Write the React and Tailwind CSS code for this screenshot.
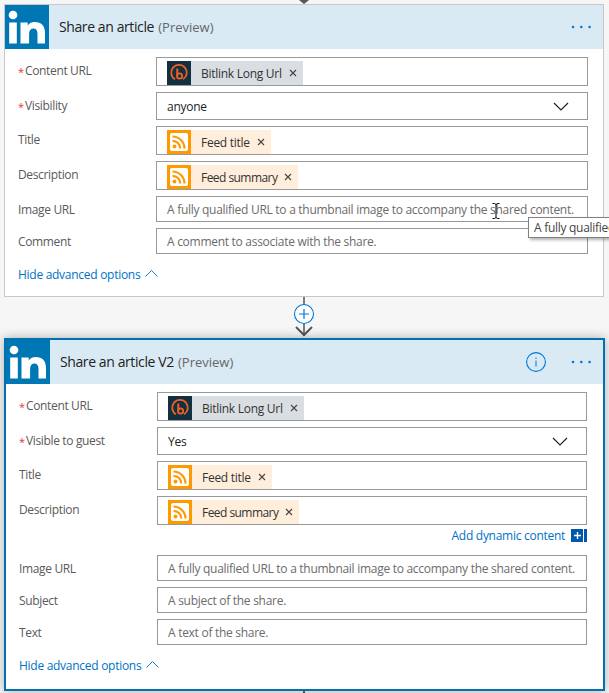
const font = { fontFamily: '"Open Sans", "Noto Sans", sans-serif' };

function LinkedIn() {
  return (
    <svg width="44" height="44" viewBox="0 0 44 44" className="shrink-0 block">
      <rect width="44" height="44" fill="#0077b5" />
      <circle cx="8" cy="10" r="4.3" fill="#fff" />
      <rect x="4.2" y="17.5" width="7.6" height="21" fill="#fff" />
      <path d="M15.500 17.500h7.200v3c1.200-2 3.600-3.600 7-3.600 6.600 0 10.300 3.800 10.300 10.800v10.800h-7.500v-9.800c0-3.200-1.300-5.200-4-5.200-2.800 0-4.400 2-4.400 5.200v9.800h-8.600z" fill="#fff" />
    </svg>
  );
}

function Bitly() {
  return (
    <svg width="24" height="24" viewBox="0 0 24 24" className="shrink-0 block">
      <rect width="24" height="24" fill="#12303f" />
      <path d="M8 18.300A7.800 7.800 0 1 1 16 18.300" fill="none" stroke="#ee6123" strokeWidth="1.800" />
      <path d="M10.300 7.500v7.500" fill="none" stroke="#ee6123" strokeWidth="2" />
      <circle cx="12.600" cy="15" r="2.600" fill="none" stroke="#ee6123" strokeWidth="1.800" />
    </svg>
  );
}

function Rss() {
  return (
    <svg width="24" height="24" viewBox="0 0 24 24" className="shrink-0 block">
      <rect width="24" height="24" fill="#ff9900" />
      <rect x="3" y="3" width="18" height="18" rx="2" fill="#fff" />
      <circle cx="7.500" cy="16.500" r="1.900" fill="#ff9900" />
      <path d="M5.500 10.800a7.700 7.700 0 0 1 7.700 7.700M5.500 6.500a12 12 0 0 1 12 12" fill="none" stroke="#ff9900" strokeWidth="2.200" />
    </svg>
  );
}

function Chip({ kind, text, tight }) {
  const bitly = kind === "bitly";
  return (
    <div className={`flex items-center h-6 mt-[3px] ${bitly ? "bg-[#d9dee2]" : "bg-[#ffeedb]"}`}>
      {bitly ? <Bitly /> : <Rss />}
      <span className={`ml-[10px] pt-[1px] text-[12px] leading-none text-[#333333] ${tight ? "tracking-[-0.55px]" : "tracking-[-0.27px]"}`}>{text}</span>
      <svg width="8" height="8" viewBox="0 0 8 8" className="ml-[7px] mr-[6px]">
        <path d="M1 1l6 6M7 1l-6 6" stroke="#444" strokeWidth="1.100" fill="none" />
      </svg>
    </div>
  );
}

function Row({ label, required, h, mt, children, select }) {
  return (
    <div className={`flex ${mt}`}>
      <div className="w-[138px] shrink-0 pt-[5px] text-[12px] tracking-[-0.35px] leading-[17px] text-[#5a5a5a] flex">
        {required && <span className="text-[#e2353d] w-[7px] text-[11px] pt-[1px]">*</span>}
        <span>{label}</span>
      </div>
      <div className={`flex-1 min-w-0 ${h} border border-[#999999] bg-white flex items-start pl-[10px] pr-[18px]`}>
        {children}
        {select && (
          <svg width="16" height="9" viewBox="0 0 16 9" className="ml-auto mt-[9px]">
            <path d="M1 1l7 7 7-7" stroke="#222" strokeWidth="1.200" fill="none" />
          </svg>
        )}
      </div>
    </div>
  );
}

const Placeholder = ({ children }) => (
  <span className="text-[12px] leading-[17px] pt-[4px] tracking-[-0.28px] whitespace-nowrap text-[#6b6b6b]">{children}</span>
);

const Value = ({ children }) => (
  <span className="text-[12px] leading-[17px] pt-[5px] tracking-[-0.27px] text-[#222222]">{children}</span>
);

function Header({ title, info }) {
  return (
    <div className="flex items-center h-11 bg-[#d9eaf5]">
      <LinkedIn />
      <span className="pl-[10px] text-[14px] tracking-[-0.4px] leading-none text-[#222222]">
        {title} <span className="ml-[1px] tracking-normal text-[#666666] text-[13px]">(Preview)</span>
      </span>
      <div className="ml-auto flex items-center pr-[12px]">
        {info && (
          <svg width="20" height="20" viewBox="0 0 20 20" className="mr-[25px]">
            <circle cx="10" cy="10" r="9.400" fill="none" stroke="#0078d7" strokeWidth="1.100" />
            <rect x="9.500" y="8.500" width="1" height="6" fill="#0078d7" />
            <rect x="9.500" y="5.500" width="1" height="1.500" fill="#0078d7" />
          </svg>
        )}
        <svg width="20" height="4" viewBox="0 0 20 4">
          <circle cx="2" cy="2" r="1.300" fill="#0078d7" />
          <circle cx="10.300" cy="2" r="1.300" fill="#0078d7" />
          <circle cx="18.600" cy="2" r="1.300" fill="#0078d7" />
        </svg>
      </div>
    </div>
  );
}

function HideAdvanced({ mt }) {
  return (
    <div className={`flex items-center ${mt} text-[12px] tracking-[-0.28px] leading-[17px] text-[#0072c6]`}>
      <span>Hide advanced options</span>
      <svg width="13" height="7" viewBox="0 0 13 7" className="ml-[5px] mb-[2px]">
        <path d="M0.500 6.500l6-6 6 6" stroke="#0072c6" strokeWidth="0.900" fill="none" />
      </svg>
    </div>
  );
}

function Connector() {
  return (
    <div className="h-[41px] relative">
      <svg width="24" height="41" viewBox="0 0 24 41" className="absolute left-[292px] top-0">
        <path d="M12 0v8M12 27v12" stroke="#555" strokeWidth="1.500" fill="none" />
        <path d="M4 30l8 8 8-8" stroke="#555" strokeWidth="2" fill="none" />
        <circle cx="12" cy="17" r="9.500" fill="#fff" stroke="#0078d7" strokeWidth="1.100" />
        <path d="M12 12v10M7 17h10" stroke="#0078d7" strokeWidth="1.200" fill="none" />
      </svg>
    </div>
  );
}

export default function App() {
  return (
    <div style={font} className="w-[609px] h-[693px] overflow-hidden bg-[#f6f6f6] relative">
      <div className="h-[4px] relative">
        <svg width="12" height="4" viewBox="0 0 12 4" className="absolute left-[298px] top-0">
          <path d="M1 0l5 4 5-4z" fill="#555" />
        </svg>
      </div>

      <div className="ml-[4px] w-[600px] h-[293px] border border-[#c8c8c8] bg-white">
        <Header title="Share an article" />
        <div className="pl-[13px] pr-[15px] pt-[8px]">
          <Row label="Content URL" required h="h-[29px]">
            <Chip kind="bitly" text="Bitlink Long Url" />
          </Row>
          <Row label="Visibility" required h="h-[28px]" mt="mt-[6px]" select>
            <Value>anyone</Value>
          </Row>
          <Row label="Title" h="h-[29px]" mt="mt-[6px]">
            <Chip kind="rss" text="Feed title" />
          </Row>
          <Row label="Description" h="h-[29px]" mt="mt-[6px]">
            <Chip kind="rss" text="Feed summary" tight />
          </Row>
          <Row label="Image URL" h="h-[26px]" mt="mt-[6px]">
            <Placeholder>A fully qualified URL to a thumbnail image to accompany the shared content.</Placeholder>
          </Row>
          <Row label="Comment" h="h-[26px]" mt="mt-[6px]">
            <Placeholder>A comment to associate with the share.</Placeholder>
          </Row>
          <HideAdvanced mt="mt-[12px]" />
        </div>
      </div>

      <Connector />

      <div className="ml-[4px] w-[601px] h-[353px] border-2 border-[#0072b1] bg-white shadow-[0_0_10px_rgba(0,0,0,0.3)] relative">
        <Header title="Share an article V2" info />
        <div className="pl-[13px] pr-[16px] pt-[8px]">
          <Row label="Content URL" required h="h-[29px]">
            <Chip kind="bitly" text="Bitlink Long Url" />
          </Row>
          <Row label="Visible to guest" required h="h-[28px]" mt="mt-[6px]" select>
            <Value>Yes</Value>
          </Row>
          <Row label="Title" h="h-[29px]" mt="mt-[6px]">
            <Chip kind="rss" text="Feed title" />
          </Row>
          <Row label="Description" h="h-[29px]" mt="mt-[6px]">
            <Chip kind="rss" text="Feed summary" tight />
          </Row>
          <div className="flex justify-end items-center h-[21px] text-[12px] tracking-[-0.28px] text-[#0072c6]">
            <span>Add dynamic content</span>
            <span className="ml-[6px] w-[16px] h-[13px] flex bg-[#0058ad]">
              <span className="w-[13px] h-full flex items-center justify-center border-r border-white">
                <svg width="7" height="7" viewBox="0 0 7 7">
                  <path d="M3.500 0v7M0 3.500h7" stroke="#fff" strokeWidth="1.400" />
                </svg>
              </span>
            </span>
          </div>
          <Row label="Image URL" h="h-[26px]" mt="mt-[9px]">
            <Placeholder>A fully qualified URL to a thumbnail image to accompany the shared content.</Placeholder>
          </Row>
          <Row label="Subject" h="h-[26px]" mt="mt-[6px]">
            <Placeholder>A subject of the share.</Placeholder>
          </Row>
          <Row label="Text" h="h-[26px]" mt="mt-[6px]">
            <Placeholder>A text of the share.</Placeholder>
          </Row>
          <HideAdvanced mt="mt-[12px]" />
        </div>
      </div>

      <div className="absolute left-[303px] top-[690px] w-[2px] h-[3px] bg-[#555555]" />

      <div className="absolute left-[528px] top-[217px] h-[21px] w-[120px] border border-[#808080] bg-white pl-[5px] text-[12px] tracking-[-0.28px] leading-[19px] whitespace-nowrap text-[#444444] shadow-[2px_2px_3px_rgba(0,0,0,0.3)]">
        A fully qualified URL
      </div>

      <svg width="8" height="16" viewBox="0 0 8 16" className="absolute left-[492px] top-[203px]">
        <path d="M0.500 0.500h2l1.500 1 1.500-1h2M4 1.500v13M0.500 15.500h2l1.500-1 1.500 1h2" stroke="#000" fill="none" />
      </svg>
    </div>
  );
}
